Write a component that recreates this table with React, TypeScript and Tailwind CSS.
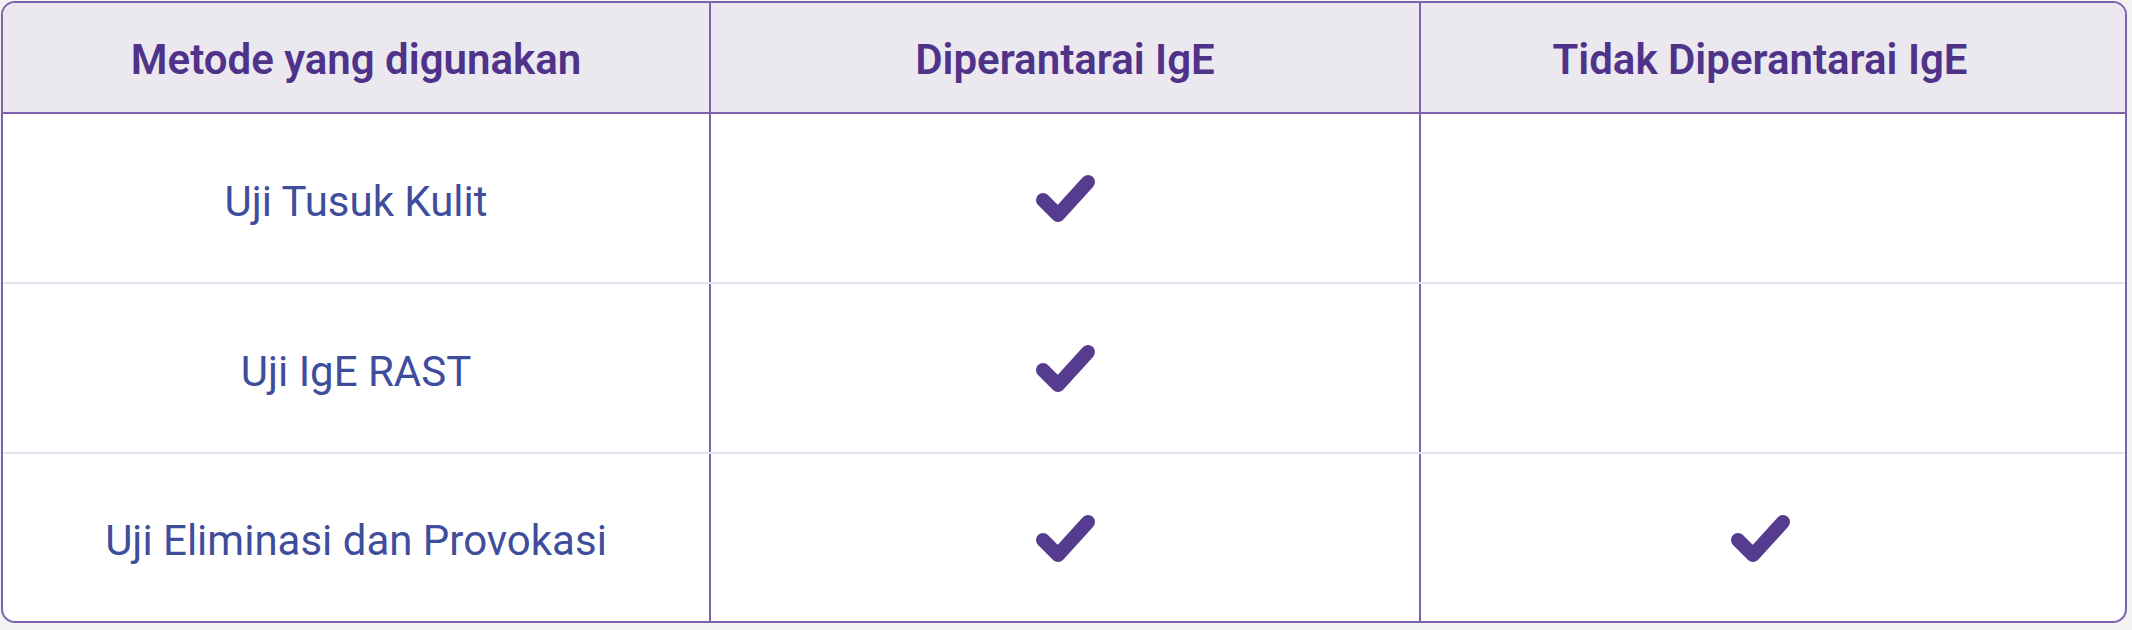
import React from "react";

const Check = () => (
  <svg width="62" height="56" viewBox="0 0 62 56" fill="none">
    <polyline
      points="9,30 24,45 54,12"
      stroke="#553c8e"
      strokeWidth="14"
      strokeLinecap="round"
      strokeLinejoin="round"
    />
  </svg>
);

const rows: { label: string; a: boolean; b: boolean }[] = [
  { label: "Uji Tusuk Kulit", a: true, b: false },
  { label: "Uji IgE RAST", a: true, b: false },
  { label: "Uji Eliminasi dan Provokasi", a: true, b: true },
];

export default function App() {
  return (
    <div
      className="w-[2132px] h-[630px] bg-[#f3f3f4] pt-[1px] pl-[1px]"
      style={{ fontFamily: "Roboto, 'Noto Sans', sans-serif" }}
    >
      <div className="w-[2126px] border-2 border-[#7b63af] rounded-[14px] overflow-hidden bg-white flex flex-col">
        <div className="flex h-[111px] bg-[#ebe8f0] border-b-2 border-[#7b63af] text-[42px] font-semibold text-[#4f3389]">
          <div className="w-[706px] flex items-center justify-center pt-[4px]">Metode yang digunakan</div>
          <div className="w-[710px] border-l-2 border-[#7b63af] flex items-center justify-center pt-[4px]">Diperantarai IgE</div>
          <div className="flex-1 border-l-2 border-[#7b63af] flex items-center justify-center pr-[26px] pt-[4px]">Tidak Diperantarai IgE</div>
        </div>
        {rows.map((r, i) => (
          <div
            key={r.label}
            className={
              i < rows.length - 1
                ? "flex h-[170px] border-b-2 border-[#e5e1f1]"
                : "flex h-[167px]"
            }
          >
            <div className="w-[706px] flex items-center justify-center pt-[6px] text-[42px] font-normal text-[#3f4e9c]">{r.label}</div>
            <div className="w-[710px] border-l-2 border-[#7b63af] flex items-center justify-center">
              {r.a && <Check />}
            </div>
            <div className="flex-1 border-l-2 border-[#7b63af] flex items-center justify-center pr-[26px]">
              {r.b && <Check />}
            </div>
          </div>
        ))}
      </div>
    </div>
  );
}
